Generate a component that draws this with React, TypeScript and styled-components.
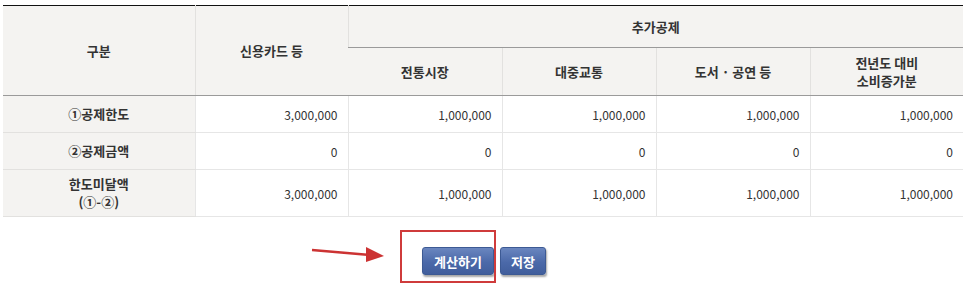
import * as React from "react";
import styled, {createGlobalStyle} from "styled-components";

interface Row {
    label: React.ReactNode;
    values: string[];
    tall?: boolean;
};

const rows: Row[] = [
    {label: "①공제한도", values: ["3,000,000", "1,000,000", "1,000,000", "1,000,000", "1,000,000"]},
    {label: "②공제금액", values: ["0", "0", "0", "0", "0"]},
    {label: <>한도미달액<br />(①-②)</>, values: ["3,000,000", "1,000,000", "1,000,000", "1,000,000", "1,000,000"], tall: true},
];

const GlobalStyle = createGlobalStyle`
    body {
        margin: 0;
        background: #fff;
        font-family: "Noto Sans CJK KR", "Noto Sans", sans-serif;
    }
`;

const Page = styled.div`
    padding: 5px 12px 20px 3px;
    width: 960px;
`;

const Table = styled.table`
    width: 960px;
    border-collapse: collapse;
    table-layout: fixed;
    border-top: 1px solid #111;
    border-bottom: 1px solid #e4e4e4;
`;

const Th = styled.th<{$height: number; $line?: boolean}>`
    height: ${(p) => p.$height}px;
    padding: 0;
    background: #f4f3f1;
    color: #333;
    font-size: 13px;
    font-weight: 700;
    line-height: 18px;
    text-align: center;
    border-left: 1px solid #e2e1df;
    border-bottom: 1px solid ${(p) => (p.$line ? "#9a9a9a" : "#e2e1df")};
    &:first-child {
        border-left: none;
    }
`;

const Td = styled.td<{$height: number}>`
    height: ${(p) => p.$height}px;
    padding: 0 10px 0 0;
    color: #333;
    font-size: 12px;
    text-align: right;
    border-left: 1px solid #e6e6e6;
    border-bottom: 1px solid #e6e6e6;
`;

const ButtonRow = styled.div`
    display: flex;
    justify-content: center;
    gap: 6px;
    margin-top: 30px;
    padding-left: 2px;
`;

const Marked = styled.div`
    position: relative;
`;

const Button = styled.button<{$width: number}>`
    width: ${(p) => p.$width}px;
    height: 28px;
    padding: 0;
    border: 1px solid #3d5a94;
    border-radius: 3px;
    background: linear-gradient(#6a86bf, #4b69a9 55%, #415e9c);
    box-shadow: 1px 2px 2px rgba(0, 0, 0, 0.35);
    color: #fff;
    font-family: "Noto Sans CJK KR", sans-serif;
    font-size: 13px;
    font-weight: 700;
`;

const RedBox = styled.div`
    position: absolute;
    left: -22px;
    top: -17px;
    width: 92px;
    height: 49px;
    border: 2px solid #cf3b3b;
    pointer-events: none;
`;

const Arrow = styled.svg`
    position: absolute;
    left: -112px;
    top: -2px;
`;

const App: React.FC = () => {
    return (
        <Page>
            <GlobalStyle />
            <Table>
                <colgroup>
                    <col style={{width: 192}} />
                    <col style={{width: 153}} />
                    <col style={{width: 154}} />
                    <col style={{width: 154}} />
                    <col style={{width: 154}} />
                    <col style={{width: 153}} />
                </colgroup>
                <thead>
                    <tr>
                        <Th rowSpan={2} $height={89} $line>구분</Th>
                        <Th rowSpan={2} $height={89} $line>신용카드 등</Th>
                        <Th colSpan={4} $height={41} $line>추가공제</Th>
                    </tr>
                    <tr>
                        <Th $height={47} $line>전통시장</Th>
                        <Th $height={47} $line>대중교통</Th>
                        <Th $height={47} $line>도서 · 공연 등</Th>
                        <Th $height={47} $line>전년도 대비<br />소비증가분</Th>
                    </tr>
                </thead>
                <tbody>
                    {rows.map((row, i) => (
                        <tr key={i}>
                            <Th $height={row.tall ? 46 : 36}>{row.label}</Th>
                            {row.values.map((v, j) => (
                                <Td key={j} $height={row.tall ? 46 : 36}>{v}</Td>
                            ))}
                        </tr>
                    ))}
                </tbody>
            </Table>
            <ButtonRow>
                <Marked>
                    <RedBox />
                    <Arrow width="80" height="20" viewBox="0 0 80 20">
                        <line x1="2" y1="5" x2="60" y2="10" stroke="#cc3333" strokeWidth="2.5" />
                        <polygon points="56,2 74,11 56,17" fill="#cc3333" />
                    </Arrow>
                    <Button $width={72}>계산하기</Button>
                </Marked>
                <Button $width={46}>저장</Button>
            </ButtonRow>
        </Page>
    );
};

export default App;
